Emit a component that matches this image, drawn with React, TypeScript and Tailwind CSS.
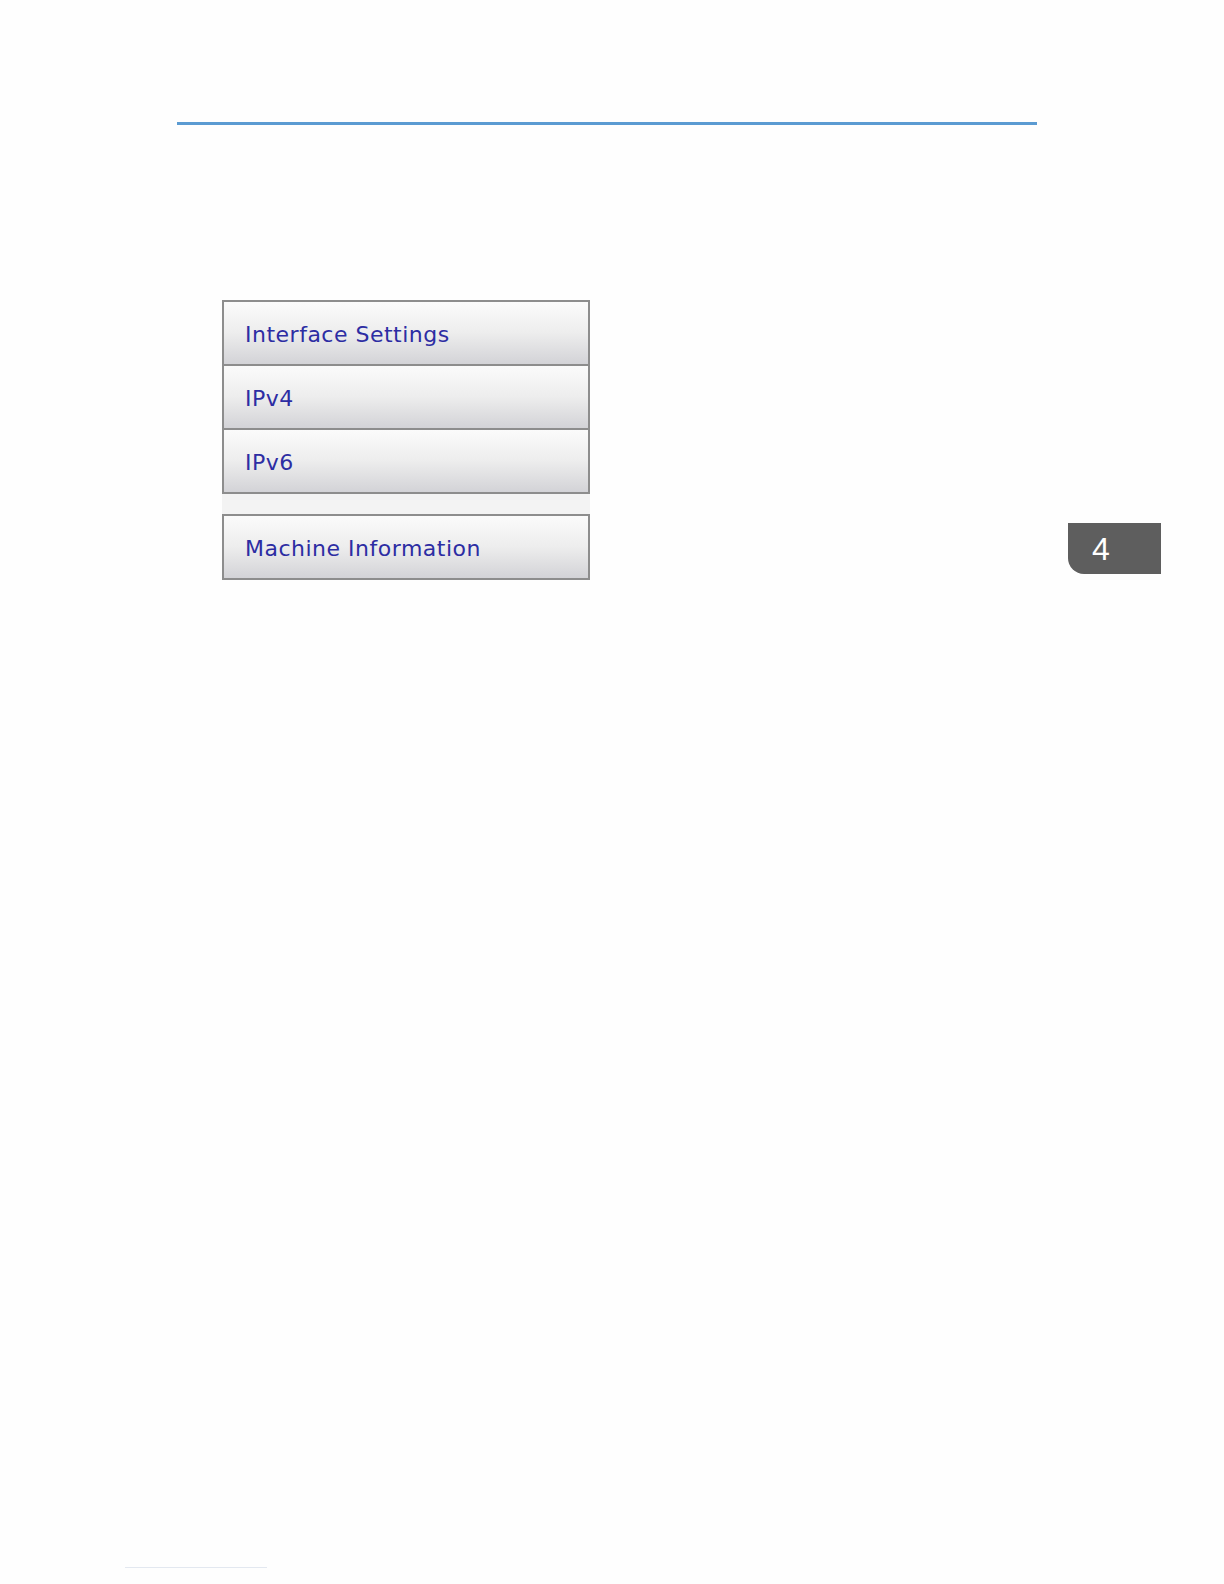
import React from "react";

const Btn = ({ label, first }: { label: string; first?: boolean }) => (
  <div
    className={`flex items-center pl-[21px] pt-[3px] border-x-2 border-b-2 border-[#8d8d8d] bg-gradient-to-b from-[#fbfbfb] via-[#ededed] to-[#d3d3d7] text-[#2d2da3] text-[22px] tracking-[0.5px] ${
      first ? "border-t-2 h-[66px]" : "h-[64px]"
    }`}
    style={{ fontFamily: '"DejaVu Sans", Verdana, sans-serif' }}
  >
    {label}
  </div>
);

export default function App() {
  return (
    <div className="w-[1224px] h-[1584px] bg-[#fefefe] flex flex-col">
      <div className="ml-[177px] mt-[122px] w-[860px] h-[3px] bg-[#5b9bd2]" />
      <div className="flex mt-[175px]">
        <div className="ml-[222px] w-[368px] flex flex-col bg-[#f3f3f3]">
          <Btn label="Interface Settings" first />
          <Btn label="IPv4" />
          <Btn label="IPv6" />
          <div className="h-[20px]" />
          <Btn label="Machine Information" first />
        </div>
        <div
          className="ml-[478px] mt-[223px] w-[93px] h-[51px] bg-[#5e5e5e] rounded-bl-[16px] flex items-center pl-[24px] text-white text-[32px] leading-none"
          style={{ fontFamily: '"Liberation Sans", Arial, sans-serif' }}
        >
          4
        </div>
      </div>
      <div className="mt-auto mb-[16px] ml-[125px] w-[142px] h-[1px] bg-[#e3e8f0]" />
    </div>
  );
}
